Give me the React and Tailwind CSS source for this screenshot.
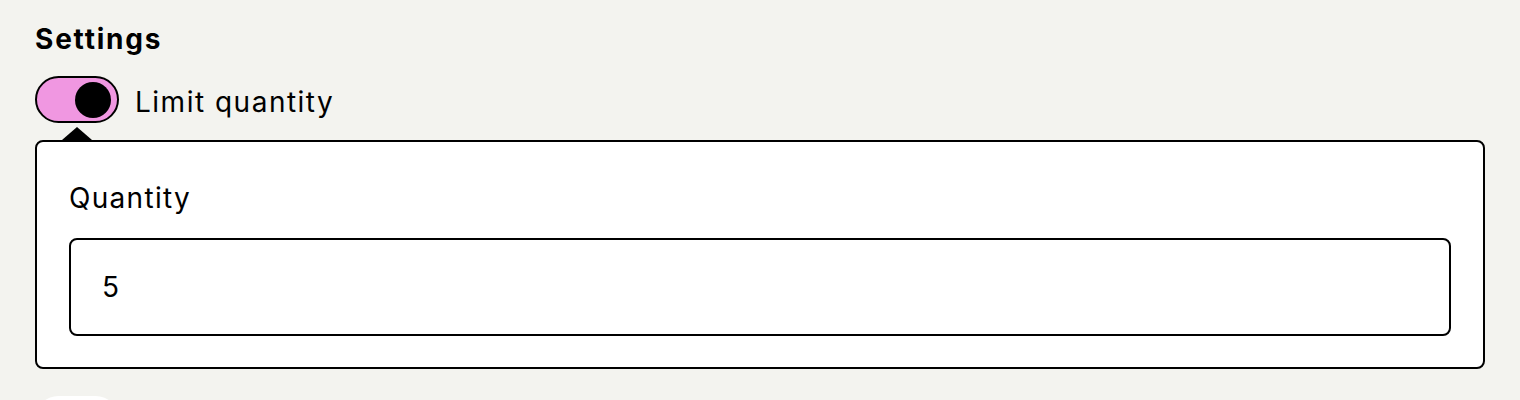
import React, { useState } from 'react';

const Toggle = ({ checked, onChange }) => (
  <button
    type="button"
    role="switch"
    aria-checked={checked}
    onClick={() => onChange(!checked)}
    className={`relative flex h-[47px] w-[84px] shrink-0 items-center rounded-full border-2 border-black px-[6px] ${
      checked ? 'justify-end bg-[#f097e1]' : 'justify-start bg-white'
    }`}
  >
    <span className={`block h-[36px] w-[36px] rounded-full ${checked ? 'bg-black' : 'bg-white border-2 border-black'}`} />
  </button>
);

const App = () => {
  const [limit, setLimit] = useState(true);
  const [quantity, setQuantity] = useState('5');

  return (
    <div className="min-h-screen bg-[#f3f3ef] px-[35px] pt-[22px] font-['Inter',sans-serif] text-black">
      <h2 className="text-[28px] font-bold leading-[34px] tracking-[1.8px]">Settings</h2>

      <div className="mt-[20px] flex items-center gap-[16px]">
        <Toggle checked={limit} onChange={setLimit} />
        <span className="pt-[4px] text-[28px] leading-[34px] tracking-[1.5px]">Limit quantity</span>
      </div>

      {limit && (
        <div className="relative mt-[17px] rounded-[8px] border-2 border-black bg-white px-8 pb-[31px] pt-[39px]">
          {/* little pointer under the toggle */}
          <span className="absolute -top-[15px] left-[25px] h-0 w-0 border-x-[15px] border-b-[13px] border-x-transparent border-b-black" />
          <label className="block text-[28px] leading-[34px] tracking-[1.3px]">Quantity</label>
          <input
            type="text"
            value={quantity}
            onChange={(e) => setQuantity(e.target.value)}
            className="mt-[23px] block h-[98px] w-full rounded-[8px] border-2 border-black bg-white pl-[31px] text-[28px] outline-none"
          />
        </div>
      )}

      {/* next control, cut off by the bottom of the frame */}
      <div className="mt-[27px] h-[47px] w-[84px] rounded-full bg-white" />
    </div>
  );
};

export default App;
